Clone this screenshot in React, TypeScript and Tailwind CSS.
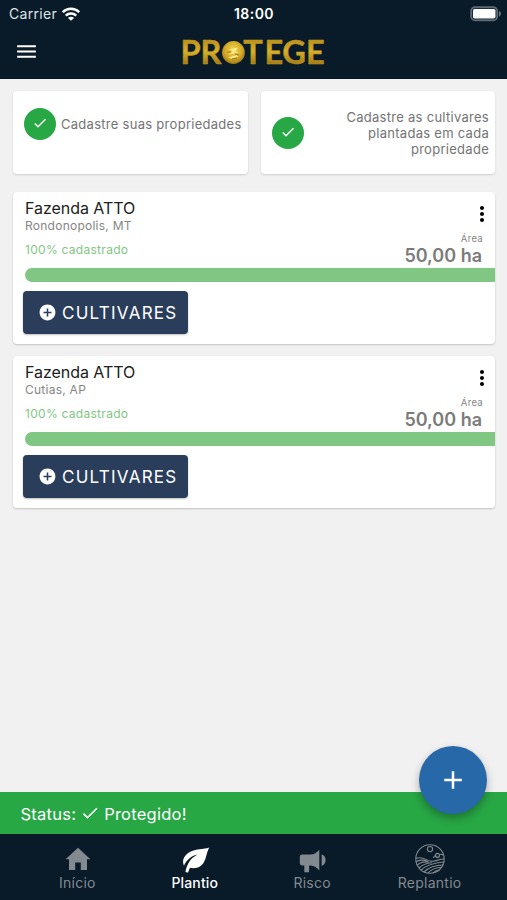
import type { ReactNode } from "react";
import { MdAdd, MdAddCircle, MdCheck, MdMenu, MdMoreVert } from "react-icons/md";

type Farm = {
  id: number;
  name: string;
  city: string;
  progress: number;
  area: string;
};

const farms: Farm[] = [
  { id: 1, name: "Fazenda ATTO", city: "Rondonopolis, MT", progress: 100, area: "50,00 ha" },
  { id: 2, name: "Fazenda ATTO", city: "Cutias, AP", progress: 100, area: "50,00 ha" },
];

function WifiIcon() {
  return (
    <svg width="18" height="14" viewBox="0 0 18 14" fill="none" stroke="#fff" strokeWidth="2.5">
      <path d="M0.8 5.2a11.6 11.6 0 0 1 16.4 0" />
      <path d="M3.8 8.6a7.4 7.4 0 0 1 10.4 0" />
      <path d="M9 13.8 6 10.9a4.2 4.2 0 0 1 6 0z" fill="#fff" stroke="none" />
    </svg>
  );
}

function BatteryIcon() {
  return (
    <svg width="32" height="16" viewBox="0 0 32 16">
      <rect x="1.2" y="1.2" width="26" height="13" rx="3.8" fill="none" stroke="#5d6975" strokeWidth="1.9" />
      <rect x="3" y="3" width="22.5" height="9.4" rx="1.6" fill="#fff" />
      <path d="M29 5v5.4c2.6-.8 2.6-4.6 0-5.4z" fill="#69747e" />
    </svg>
  );
}

function Logo() {
  return (
    <svg width="150" height="46" viewBox="0 0 150 46">
      <defs>
        <linearGradient id="gold" x1="0" y1="0.2" x2="0" y2="0.85">
          <stop offset="0" stopColor="#b98f19" />
          <stop offset="0.45" stopColor="#d9b02b" />
          <stop offset="1" stopColor="#a0770f" />
        </linearGradient>
        <radialGradient id="coin" cx="0.5" cy="0.4" r="0.6">
          <stop offset="0" stopColor="#f2d654" />
          <stop offset="0.6" stopColor="#d6ac28" />
          <stop offset="1" stopColor="#a37a14" />
        </radialGradient>
      </defs>
      <g
        fill="url(#gold)"
        stroke="#c29a20"
        strokeWidth="0.5"
        fontFamily="Lato, sans-serif"
        fontWeight="700"
        fontSize="32.5"
      >
        <text x="-0.5 19.4" y="35">PR</text>
        <text x="62.2 83.4 101.2 125" y="35">TEGE</text>
      </g>
      <circle cx="52.4" cy="23.5" r="11.4" fill="url(#coin)" />
      <path d="M48 20.5l9-2-3 4.5h5l-11 2.5 4-3.5zM47 28.5l9-2.5 1 2-7 1.5z" fill="#f9ec8c" />
      <path d="M46 23h4M54 25l4 1M51 30l5-1" stroke="#9d7616" strokeWidth="1" />
    </svg>
  );
}

function HomeIcon() {
  return (
    <svg width="26" height="24" viewBox="0 0 26 24" fill="#82898f">
      <path d="M13 .8 25.4 12.2H22V23h-6.2v-7.6h-5.6V23H4V12.2H.6z" />
    </svg>
  );
}

function LeafIcon() {
  return (
    <svg width="28" height="26" viewBox="0 0 28 26">
      <path
        d="M27.3.5C22 2.6 12.5 1.6 6.5 5.8 1.4 9.4-.2 14.4 2 18.8c.8-2.4 2.4-4.8 5-7 3-2.6 6-3.6 8.8-4.2C9.2 10.6 5.6 15.6 3.4 24.6c.8 1 2 .9 2.8.6.6-1.7 1.1-3 1.900-4.400 6.400 1.600 11.600-1.200 14-6C24.600 10.600 24.300 5.800 27.300.500z"
        fill="#fff"
      />
    </svg>
  );
}

function MegaphoneIcon() {
  return (
    <svg width="28" height="24" viewBox="0 0 28 24" fill="#82898f">
      <path d="M3 5.6h8.5C15 5.6 18 3.4 20.3.8v20.6c-2.3-2.600-5.300-4.900-8.800-4.900H10.100v6.700H5.300v-6.700H3c-1.200 0-2.200-1-2.200-2.200V7.800c0-1.200 1-2.200 2.200-2.200z" />
      <path d="M22.600 5.300c5.400 1.600 5.400 10 0 11.600z" />
    </svg>
  );
}

function ReplantIcon() {
  return (
    <svg width="30" height="30" viewBox="0 0 30 30" fill="none" stroke="#82898f" strokeWidth="1.1">
      <circle cx="15" cy="15" r="14.2" />
      <circle cx="15" cy="5.1" r="2.6" />
      <circle cx="22.5" cy="11.4" r="2" />
      <path d="M18.5 14c.2-2 1.7-2.5 3-1.8M25 10.5c1.5-.5 2.5 0 3.2.8" />
      <path d="M1 14.5c8-3.5 10 3.5 17 2.8 4-.4 7-2.5 11-2.3" />
      <path d="M1 18c3.5-3 8-2 12-.5M2 21.5c3-3.5 8-3.8 11.5-3.5M4 24c3-3.2 8-5 13-5.3" />
      <path d="M6 26.3c5-5.5 14-7.5 23-8.3M9 28c5-5 12-7 19.5-7M13 29c4-4.5 8.5-5.5 14-5.5M18 29c2.5-2.5 4-3 7-3" />
    </svg>
  );
}

function CheckBadge() {
  return (
    <span className="flex size-8 shrink-0 items-center justify-center rounded-full bg-[#28a745] text-white">
      <MdCheck className="size-4 -translate-y-px" />
    </span>
  );
}

function FarmCard({ farm }: { farm: Farm }) {
  return (
    <section className="h-[152px] overflow-hidden rounded-[4px] bg-white pt-[5px] shadow-[0_1px_2px_rgba(0,0,0,0.2)]">
      <div className="flex h-[71px] justify-between pl-[12px]">
        <div>
          <h2 className="text-[16px] leading-[23px] tracking-[-0.05px] text-[#202020]">{farm.name}</h2>
          <p className="text-[12px] leading-[12px] tracking-[0.25px] text-[#858585]">{farm.city}</p>
          <p className="mt-[11px] text-[12px] leading-[13px] tracking-[0.28px] text-[#81c784]">
            {farm.progress}% cadastrado
          </p>
        </div>
        <div className="flex flex-col items-end">
          <button className="mr-px mt-[5px] text-black">
            <MdMoreVert className="size-6" />
          </button>
          <span className="mr-[12px] mt-[7px] text-[9.5px] leading-[12px] tracking-[0.3px] text-[#858585]">Área</span>
          <strong className="mr-[13px] text-[18px] font-semibold leading-[22px] text-[#7b7b7b]">{farm.area}</strong>
        </div>
      </div>
      <div className="ml-[12px] h-[14px] overflow-hidden rounded-l-full">
        <div className="h-full bg-[#81c784]" style={{ width: `${farm.progress}%` }} />
      </div>
      <button className="ml-[10px] mt-[9px] flex h-[43px] w-[165px] items-center rounded-[4px] bg-[#2a3e5b] pl-[15px] text-white shadow-[0_1px_2px_rgba(0,0,0,0.25)]">
        <MdAddCircle className="mr-[5px] size-[19px]" />
        <span className="pt-[2px] text-[17px] tracking-[1.25px]">CULTIVARES</span>
      </button>
    </section>
  );
}

function Tab({ icon, label, active = false }: { icon: ReactNode; label: string; active?: boolean }) {
  return (
    <button
      className={`flex w-[117.4px] flex-col items-center text-[14px] leading-[17px] ${
        active ? "font-medium tracking-[0.15px] text-white" : "tracking-[0.25px] text-[#82898f]"
      }`}
    >
      <span className="flex h-[30px] items-center">{icon}</span>
      {label}
    </button>
  );
}

export default function App() {
  return (
    <div className="flex h-[900px] w-[507px] flex-col overflow-hidden bg-[#f1f1f1] font-['Inter',sans-serif]">
      <header className="h-[79px] shrink-0 bg-[#091a29] text-white">
        <div className="grid h-[27px] grid-cols-3 items-center pl-[8px] pr-[5px]">
          <div className="flex items-center gap-[5px] pl-px text-[14px] tracking-[0.3px] text-[#dfe3e6]">
            Carrier
            <WifiIcon />
          </div>
          <time className="-ml-[2px] text-center text-[14px] font-semibold tracking-[0.45px]">18:00</time>
          <div className="flex justify-end">
            <BatteryIcon />
          </div>
        </div>
        <div className="flex h-[49px] items-center pl-[14px]">
          <button>
            <MdMenu className="size-[25px]" />
          </button>
          <div className="ml-[142px]">
            <Logo />
          </div>
        </div>
      </header>

      <main className="flex-1 pl-[13px] pr-[12px] pt-[12px]">
        <div className="flex justify-between">
          <div className="flex h-[83px] w-[235px] items-start gap-[5px] rounded-[4px] bg-white pl-[11px] pt-[17px] shadow-[0_1px_2px_rgba(0,0,0,0.15)]">
            <CheckBadge />
            <p className="whitespace-nowrap text-[13px] leading-8 tracking-[0.28px] text-[#747474]">
              Cadastre suas propriedades
            </p>
          </div>
          <div className="flex h-[83px] w-[234px] items-center justify-between rounded-[4px] bg-white pl-[11px] pr-[6px] shadow-[0_1px_2px_rgba(0,0,0,0.15)]">
            <CheckBadge />
            <p className="w-[160px] text-right text-[13px] leading-[16px] tracking-[0.28px] text-[#747474]">
              Cadastre as cultivares plantadas em cada propriedade
            </p>
          </div>
        </div>
        <div className="mt-[18px] flex flex-col gap-[12px]">
          {farms.map((farm) => (
            <FarmCard key={farm.id} farm={farm} />
          ))}
        </div>
      </main>

      <div className="relative flex h-[42px] shrink-0 items-center bg-[#28a745] pl-[20.5px] pt-[2px] text-[16.5px] tracking-[0.24px] text-white">
        <span>Status:</span>
        <MdCheck className="mx-[4px] size-[20px] -translate-y-px" />
        <span>Protegido!</span>
        <button className="absolute -top-[46px] right-[20px] flex size-[68px] items-center justify-center rounded-full bg-[#2769a8] shadow-[0_4px_8px_rgba(0,0,0,0.3)]">
          <MdAdd className="size-[30px]" />
        </button>
      </div>

      <nav className="flex h-[66px] shrink-0 justify-center bg-[#091a29] pt-[10px]">
        <Tab icon={<span className="pl-[2px]"><HomeIcon /></span>} label="Início" />
        <Tab icon={<span className="pl-[2px] pt-[2px]"><LeafIcon /></span>} label="Plantio" active />
        <Tab icon={<span className="pl-[2px] pt-[4px]"><MegaphoneIcon /></span>} label="Risco" />
        <Tab icon={<ReplantIcon />} label="Replantio" />
      </nav>
    </div>
  );
}
